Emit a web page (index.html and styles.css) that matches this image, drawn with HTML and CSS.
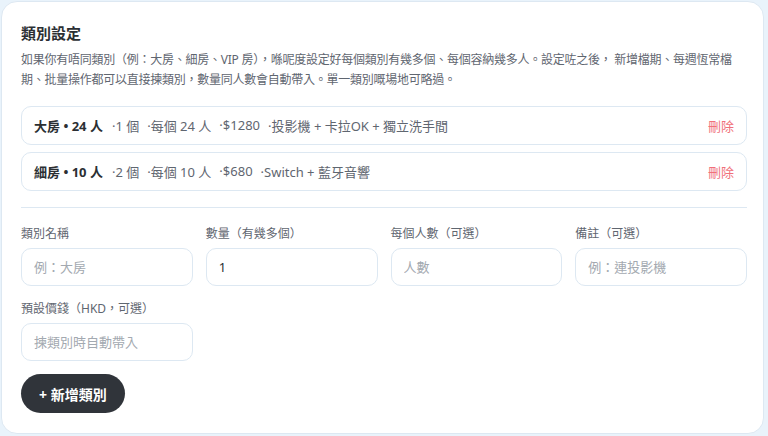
FILE: index.html
```html
<!DOCTYPE html>
<html lang="zh-Hant">
<head>
  <meta charset="UTF-8" />
  <meta name="viewport" content="width=device-width, initial-scale=1.0" />
  <title>類別設定</title>
  <link rel="stylesheet" href="styles.css">
</head>
<body>
  <div class="panel">
    <h2>類別設定</h2>
    <p class="intro">如果你有唔同類別（例：大房、細房、VIP 房），喺呢度設定好每個類別有幾多個、每個容納幾多人。設定咗之後， 新增檔期、每週恆常檔期、批量操作都可以直接揀類別，數量同人數會自動帶入。單一類別嘅場地可略過。</p>

    <div class="cat-list">
      <div class="cat-row">
        <div class="cat-info"><b>大房 • 24 人</b><span>·1 個</span><span>·每個 24 人</span><span>·$1280</span><span>·投影機 + 卡拉OK + 獨立洗手間</span></div>
        <a class="del">刪除</a>
      </div>
      <div class="cat-row">
        <div class="cat-info"><b>細房 • 10 人</b><span>·2 個</span><span>·每個 10 人</span><span>·$680</span><span>·Switch + 藍牙音響</span></div>
        <a class="del">刪除</a>
      </div>
    </div>

    <hr class="divider" />

    <div class="form-grid">
      <label class="field">
        <span>類別名稱</span>
        <input type="text" placeholder="例：大房" />
      </label>
      <label class="field">
        <span>數量（有幾多個）</span>
        <input type="text" value="1" />
      </label>
      <label class="field">
        <span>每個人數（可選）</span>
        <input type="text" placeholder="人數" />
      </label>
      <label class="field">
        <span>備註（可選）</span>
        <input type="text" placeholder="例：連投影機" />
      </label>
      <label class="field">
        <span>預設價錢（HKD，可選）</span>
        <input type="text" placeholder="揀類別時自動帶入" />
      </label>
    </div>

    <button class="add-btn">+ 新增類別</button>
  </div>
</body>
</html>
```

FILE: styles.css
```css
:root {
  --text-color: #2b2f33;
  --muted: #5f6670;
  --line: #dde8f2;
  --page-bg: #e9f3fb;
  --danger: #f0707a;
}

* {
  box-sizing: border-box;
  margin: 0;
  padding: 0;
  font-family: 'Noto Sans', 'Noto Sans CJK TC', sans-serif;
}

body {
  background: var(--page-bg);
  padding: 1px 4px 1px 1px;
  color: var(--text-color);
}

.panel {
  background: #fff;
  border: 1px solid var(--line);
  border-radius: 16px;
  padding: 20px 16px 20px 19px;
  min-height: 433px;
}

h2 {
  font-size: 15px;
  font-weight: 700;
  line-height: 22px;
  margin-bottom: 6px;
}

.intro {
  font-size: 12px;
  line-height: 20px;
  letter-spacing: -0.25px;
  color: var(--muted);
  margin-bottom: 16px;
}

.cat-list {
  display: flex;
  flex-direction: column;
  gap: 7px;
}

.cat-row {
  display: flex;
  align-items: center;
  justify-content: space-between;
  border: 1px solid var(--line);
  border-radius: 10px;
  height: 39px;
  padding: 0 12px 0 12px;
}

.cat-info {
  font-size: 13px;
  color: var(--muted);
  display: flex;
  gap: 8px;
}

.cat-info b {
  color: var(--text-color);
  margin-right: 1px;
}

.del {
  font-size: 13px;
  color: var(--danger);
  cursor: pointer;
}

.divider {
  border: none;
  border-top: 1px solid var(--line);
  margin: 16px 0 17px;
}

.form-grid {
  display: grid;
  grid-template-columns: repeat(4, minmax(0, 1fr));
  column-gap: 13px;
  row-gap: 14px;
}

.field {
  display: flex;
  flex-direction: column;
  gap: 5px;
}

.field span {
  font-size: 12px;
  color: var(--muted);
  line-height: 18px;
}

.field input {
  width: 100%;
  height: 38px;
  border: 1px solid var(--line);
  border-radius: 10px;
  padding: 0 12px;
  font-size: 13px;
  color: var(--text-color);
  outline: none;
}

.field input::placeholder {
  color: #a3a9b0;
}

.add-btn {
  margin-top: 13px;
  height: 39px;
  padding: 0 18px;
  border: none;
  border-radius: 50px;
  background: #30343a;
  color: #fff;
  font-size: 14px;
  font-weight: 700;
  cursor: pointer;
}
```
